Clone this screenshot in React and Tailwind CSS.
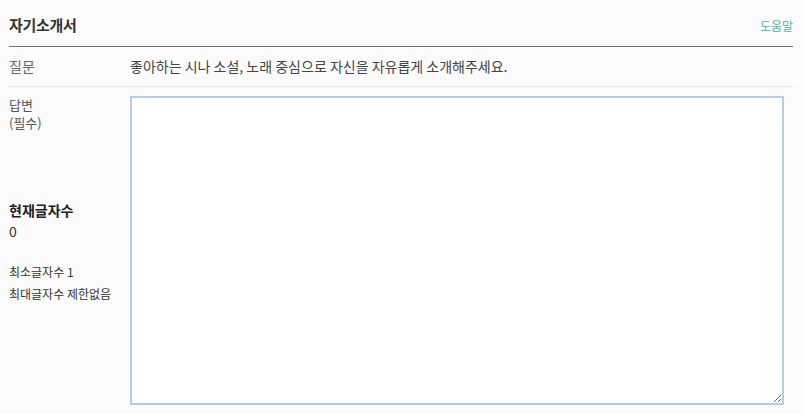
export default function App() {
  return (
    <div
      className="w-[804px] h-[414px] bg-[#fbfbfb] text-[#444] overflow-hidden"
      style={{ fontFamily: '"Noto Sans CJK KR", "Noto Sans", sans-serif' }}
    >
      <div className="ml-[9px] w-[784px]">
        <div className="flex items-end justify-between h-[47px] pb-[11px] border-b border-[#777]">
          <h1 className="text-[15px] font-bold text-[#333] leading-[20px] tracking-[-0.3px]">자기소개서</h1>
          <a className="text-[12px] text-[#4fb3b0] leading-[18px]">도움말</a>
        </div>
        <div className="flex items-center h-[40px] border-b border-[#e6e6e6] text-[14px]">
          <div className="w-[121px] text-[#666]">질문</div>
          <div className="text-[#444]">좋아하는 시나 소설, 노래 중심으로 자신을 자유롭게 소개해주세요.</div>
        </div>
        <div className="flex pt-[9px]">
          <div className="w-[121px] flex flex-col text-[#555]">
            <div className="text-[13px] leading-[18px]">답변</div>
            <div className="text-[13px] leading-[18px]">(필수)</div>
            <div className="mt-[68px] text-[14px] font-bold text-[#222] leading-[21px]">현재글자수</div>
            <div className="text-[14px] text-[#333] leading-[21px]">0</div>
            <div className="mt-[19px] text-[12px] text-[#333] leading-[22px]">최소글자수 1</div>
            <div className="text-[12px] text-[#333] leading-[22px]">최대글자수 제한없음</div>
          </div>
          <textarea className="w-[654px] h-[309px] bg-white border-2 border-[#b5cbe6] resize-y outline-none"></textarea>
        </div>
      </div>
    </div>
  )
}
